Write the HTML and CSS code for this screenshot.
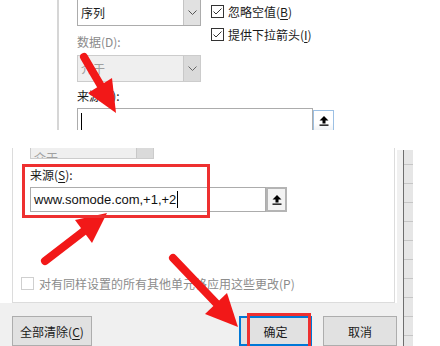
FILE: index.html
```html
<!DOCTYPE html>
<html lang="zh-CN">
<head>
    <meta charset="UTF-8">
    <meta name="viewport" content="width=device-width, initial-scale=1.0">
    <title>数据验证</title>
    <link rel="stylesheet" href="styles.css">
</head>
<body>
<div class="page">

    <!-- first capture: source box still empty -->
    <section class="shot-top">
        <div class="rule"></div>
        <div class="form">
            <div class="combo combo-seq">
                <span class="combo-text">序列</span>
                <span class="combo-btn"><svg width="9" height="5" viewBox="0 0 9 5"><path d="M0.5 0.5 L4.5 4.5 L8.5 0.5" fill="none" stroke="#555" stroke-width="1"/></svg></span>
            </div>
            <div class="checks">
                <div class="check">
                    <svg class="box" width="13" height="13" viewBox="0 0 13 13"><rect x="0.5" y="0.5" width="12" height="12" fill="#fff" stroke="#333"/><path d="M2.5 6.5 L5 9 L10.5 3.5" fill="none" stroke="#333" stroke-width="1"/></svg>
                    <span>忽略空值(<u>B</u>)</span>
                </div>
                <div class="check">
                    <svg class="box" width="13" height="13" viewBox="0 0 13 13"><rect x="0.5" y="0.5" width="12" height="12" fill="#fff" stroke="#333"/><path d="M2.5 6.5 L5 9 L10.5 3.5" fill="none" stroke="#333" stroke-width="1"/></svg>
                    <span>提供下拉箭头(<u>I</u>)</span>
                </div>
            </div>
            <div class="label label-data muted">数据(D):</div>
            <div class="combo combo-off combo-data">
                <span class="combo-text">介于</span>
                <span class="combo-btn"><svg width="9" height="5" viewBox="0 0 9 5"><path d="M0.5 0.5 L4.5 4.5 L8.5 0.5" fill="none" stroke="#666" stroke-width="1"/></svg></span>
            </div>
            <div class="label label-src">来源(<u>S</u>):</div>
            <div class="source source-top">
                <div class="field"><span class="caret"></span></div>
                <div class="pick pick-focus">
                    <svg width="10" height="10" viewBox="0 0 10 10"><path d="M5 0 L9.5 4.5 H6.5 V7.5 H3.5 V4.5 H0.5 Z" fill="#000"/><rect x="0.5" y="8.5" width="9" height="1.3" fill="#000"/></svg>
                </div>
            </div>
        </div>
    </section>

    <div class="gap"></div>

    <!-- second capture: source filled in -->
    <section class="shot-bottom">
        <div class="dialog">
            <div class="panel">
                <div class="combo combo-off combo-cut">
                    <span class="combo-text">介于</span>
                    <span class="combo-btn"></span>
                </div>
                <div class="label label-src2">来源(<u>S</u>):</div>
                <div class="source source-big">
                    <div class="field">www.somode.com,+1,+2<span class="caret caret-inline"></span></div>
                    <div class="pick">
                        <svg width="10" height="10" viewBox="0 0 10 10"><path d="M5 0 L9.5 4.5 H6.5 V7.5 H3.5 V4.5 H0.5 Z" fill="#000"/><rect x="0.5" y="8.5" width="9" height="1.3" fill="#000"/></svg>
                    </div>
                </div>
                <div class="check check-off">
                    <svg class="box" width="13" height="13" viewBox="0 0 13 13"><rect x="0.5" y="0.5" width="12" height="12" fill="#fff" stroke="#cfcfcf"/></svg>
                    <span>对有同样设置的所有其他单元格应用这些更改(P)</span>
                </div>
            </div>
            <div class="footer">
                <button class="btn btn-clear">全部清除(<u>C</u>)</button>
                <button class="btn btn-ok">确定</button>
                <button class="btn btn-cancel">取消</button>
            </div>
        </div>
        <div class="sheet">
            <div class="sheet-bar"></div>
            <div class="sheet-grid"></div>
        </div>
    </section>

    <!-- red annotations drawn over both captures -->
    <svg class="marks" width="440" height="346" viewBox="0 0 440 346">
        <g fill="#f21818" stroke="none">
            <line x1="84" y1="57" x2="101" y2="86" stroke="#f21818" stroke-width="8" stroke-linecap="round"/>
            <polygon points="116,113 112,78 88,93"/>
            <line x1="45" y1="261" x2="84" y2="231" stroke="#f21818" stroke-width="8" stroke-linecap="round"/>
            <polygon points="107,213 92,243 75,220"/>
            <line x1="173" y1="258" x2="216" y2="303" stroke="#f21818" stroke-width="8" stroke-linecap="round"/>
            <polygon points="238,327 227,293 205,314"/>
        </g>
        <rect x="23.5" y="165.5" width="185" height="51" fill="none" stroke="#ee3030" stroke-width="3"/>
        <rect x="248.5" y="314.5" width="61" height="40" fill="none" stroke="#ee3030" stroke-width="3"/>
    </svg>
</div>
</body>
</html>
```

FILE: styles.css
```css
* { box-sizing: border-box; }
body { margin: 0; background: #fff; font-family: "Noto Sans CJK SC", sans-serif; font-size: 12px; color: #1a1a1a; }
.page { position: relative; width: 440px; height: 346px; overflow: hidden; background: #fff; }
u { text-decoration-thickness: 1px; text-underline-offset: 2px; }
.muted { color: #8a8a8a; }

/* top capture */
.shot-top { height: 130px; overflow: hidden; display: flex; }
.rule { margin-left: 57px; width: 2px; background: #d6d6d6; }
.form { margin-top: -1px; margin-left: 18px; display: grid; grid-template-columns: 124px auto; column-gap: 10px; align-content: start;
    grid-template-areas: "combo checks" "lab1 checks" "combo2 ." "lab2 ." "src src"; }
.combo-seq { grid-area: combo; }
.checks { grid-area: checks; grid-row: 1 / 3; padding-top: 6px; }
.label-data { grid-area: lab1; margin-top: 6px; line-height: 16px; }
.combo-data { grid-area: combo2; margin-top: 4px; }
.label-src { grid-area: lab2; margin-top: 6px; line-height: 16px; }
.source-top { grid-area: src; margin-top: 4px; }

.combo { width: 124px; height: 27px; display: flex; border: 1px solid #acacac; background: #fff; }
.combo-text { flex: 1; padding-left: 3px; display: flex; align-items: center; }
.combo-btn { width: 17px; display: flex; align-items: center; justify-content: center; background: #e1e1e1; border-left: 1px solid #c4c4c4; }
.combo-off { background: #efefef; border-color: #cccccc; color: #a0a0a0; }
.combo-off .combo-btn { background: #dadada; border-left-color: #c8c8c8; }

.check { display: flex; align-items: center; height: 13px; margin-bottom: 10px; }
.box { flex: none; margin-right: 4px; }
.check-off { color: #8c8c8c; }

.source { display: flex; align-items: flex-start; }
.field { width: 236px; height: 26px; border: 1px solid #acacac; background: #fff; display: flex; align-items: center; padding-left: 3px; }
.caret { width: 1px; height: 17px; background: #000; }
.pick { width: 21px; height: 22px; margin-top: 2px; display: flex; align-items: center; justify-content: center; border: 1px solid #9cc0e4; background: linear-gradient(#fff 60%, #eef1f4); }

.gap { height: 18px; }

/* bottom capture */
.shot-bottom { height: 198px; display: flex; }
.dialog { width: 397px; display: flex; flex-direction: column; }
.panel { height: 157px; margin: 0 2px 0 12px; border: 1px solid #dcdcdc; border-top: none; background: #fff; }
.combo-cut { height: 11px; margin-left: 17px; border-top: none; overflow: hidden; }
.combo-cut .combo-text { align-items: flex-end; line-height: 12px; margin-bottom: -6px; }
.label-src2 { margin: 8px 0 0 17px; line-height: 16px; }
.source-big { margin: 4px 0 0 17px; }
.source-big .field { height: 25px; font-family: "Liberation Sans", "Noto Sans CJK SC", sans-serif; font-size: 13px; padding-left: 3px; color: #111; }
.caret-inline { height: 17px; margin-left: 1px; }
.source-big .pick { height: 25px; margin-top: 0; border: 2px solid #b4b4b4; background: #f3f3f3; }
.panel .check-off { margin: 65px 0 0 8px; }
.panel .check-off .box { margin-right: 5px; }

.footer { flex: 1; background: #f0f0f0; display: flex; align-items: flex-start; padding: 13px 0 0 12px; }
.btn { height: 30px; padding: 0; font-family: inherit; font-size: 12px; color: #1a1a1a; background: #e1e1e1; border: 1px solid #adadad; }
.btn-clear { width: 80px; }
.btn-ok { width: 73px; margin-left: 147px; border: 2px solid #0078d7; }
.btn-cancel { width: 74px; margin-left: 11px; position: relative; z-index: 1; }

.sheet { margin-top: 2px; display: flex; }
.sheet-bar { width: 7px; background: #f0f0f0; border-right: 1px solid #6e6e6e; }
.sheet-grid { width: 9px; background: repeating-linear-gradient(to bottom, #e6e6e6 0 18px, #c6c6c6 18px 19px); background-position: 0 -4px; }

.marks { position: absolute; left: 0; top: 0; pointer-events: none; }
```
